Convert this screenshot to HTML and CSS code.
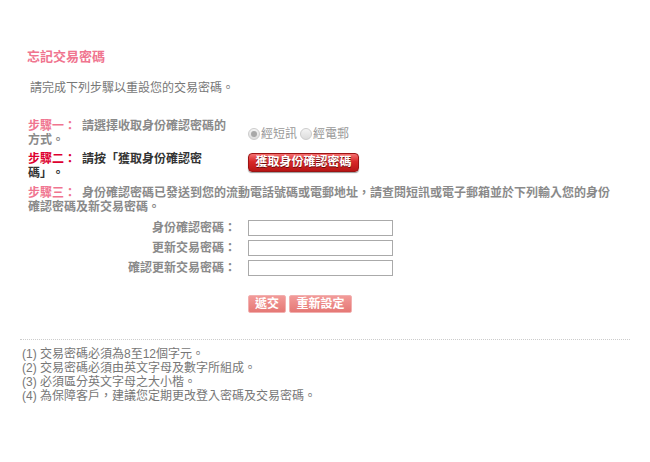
FILE: index.html
```html
<!DOCTYPE html>
<html lang="zh-Hant">

<head>
    <meta charset="UTF-8">
    <meta name="viewport" content="width=device-width, initial-scale=1.0">
    <title>忘記交易密碼</title>
    <link rel="stylesheet" href="styles.css">
</head>

<body>
    <main class="page">
        <div class="main">
            <h2 class="title">忘記交易密碼</h2>
            <p class="intro">請完成下列步驟以重設您的交易密碼。</p>

            <div class="step-row step-one">
                <div class="step-text"><span class="label">步驟一：</span>請選擇收取身份確認密碼的方式。</div>
                <div class="radios">
                    <label><input type="radio" name="way" checked>經短訊</label>
                    <label><input type="radio" name="way">經電郵</label>
                </div>
            </div>

            <div class="step-row step-two">
                <div class="step-text"><span class="label">步驟二：</span>請按「獲取身份確認密碼」。</div>
                <div><button class="btn-get">獲取身份確認密碼</button></div>
            </div>

            <div class="step-three"><span class="label">步驟三：</span>身份確認密碼已發送到您的流動電話號碼或電郵地址，請查閱短訊或電子郵箱並於下列輸入您的身份<br>確認密碼及新交易密碼。</div>

            <div class="form">
                <label class="form-label">身份確認密碼：</label>
                <input class="ipt" type="password">
                <label class="form-label">更新交易密碼：</label>
                <input class="ipt" type="password">
                <label class="form-label">確認更新交易密碼：</label>
                <input class="ipt" type="password">
            </div>

            <div class="actions">
                <button class="btn-pink">遞交</button>
                <button class="btn-pink">重新設定</button>
            </div>
        </div>

        <ul class="notes">
            <li>(1) 交易密碼必須為8至12個字元。</li>
            <li>(2) 交易密碼必須由英文字母及數字所組成。</li>
            <li>(3) 必須區分英文字母之大小楷。</li>
            <li>(4) 為保障客戶，建議您定期更改登入密碼及交易密碼。</li>
        </ul>
    </main>
</body>

</html>
```

FILE: styles.css
```css
* {
    margin: 0;
    padding: 0;
    box-sizing: border-box;
    list-style: none;
}

html,
body {
    width: 100%;
    height: 100%;
    background-color: #ffffff;
}

body {
    font-family: "Liberation Sans", "Noto Sans CJK TC", sans-serif;
    font-size: 12px;
    line-height: 14px;
    color: #666;
    text-spacing-trim: space-all;
}

.page {
    padding: 50px 20px 0 20px;
}

.main {
    padding: 0 4px 0 8px;
}

.title {
    font-size: 13px;
    font-weight: bold;
    color: #f07590;
    margin-left: -1px;
}

.intro {
    margin: 17px 0 0 2px;
    color: #777;
}

.step-row {
    display: grid;
    grid-template-columns: 206px 1fr;
    column-gap: 14px;
    margin-top: 5px;
}

.step-one {
    margin-top: 24px;
}

.step-text,
.step-three {
    font-weight: bold;
    color: #8a8a8a;
}

.label {
    color: #f07590;
    margin-right: 6px;
}

.step-two .step-text {
    color: #333;
}

.step-two .label {
    color: #dd0030;
}

.radios {
    display: flex;
    gap: 3px;
    color: #999;
    padding-top: 1px;
}

.radios label {
    display: flex;
    align-items: center;
}

.radios input {
    appearance: none;
    width: 12px;
    height: 12px;
    border-radius: 50%;
    border: 1px solid #ccc;
    background: linear-gradient(#f4f4f4, #dcdcdc);
    margin-right: 1px;
    position: relative;
}

.radios input:checked::after {
    content: '';
    position: absolute;
    left: 2px;
    top: 2px;
    width: 6px;
    height: 6px;
    border-radius: 50%;
    background-color: #a8a8a8;
}

.btn-get {
    width: 111px;
    height: 19px;
    margin-top: 1px;
    border: 1px solid #9c1414;
    border-radius: 4px;
    background: linear-gradient(#f47070 0%, #d82828 45%, #b81616 100%);
    color: #fff;
    font-family: inherit;
    font-size: 12px;
    font-weight: bold;
    line-height: 15px;
    text-shadow: 0 1px 0 #6a0808;
    box-shadow: 0 1px 1px #999;
    cursor: pointer;
}

.step-three {
    margin-top: 6px;
}

.form {
    display: grid;
    grid-template-columns: 208px 145px;
    column-gap: 12px;
    row-gap: 4px;
    margin-top: 6px;
}

.form-label {
    text-align: right;
    font-weight: bold;
    color: #8a8a8a;
    line-height: 16px;
}

.ipt {
    height: 16px;
    width: 145px;
    border: 1px solid #aaa;
    outline: none;
}

.actions {
    display: flex;
    gap: 3px;
    margin: 19px 0 0 220px;
}

.btn-pink {
    height: 18px;
    padding: 0 5px;
    border: 1px solid #f2b0b0;
    border-radius: 2px;
    background: linear-gradient(#f29a98, #e57875);
    color: #fff;
    font-family: inherit;
    font-size: 12px;
    font-weight: bold;
    line-height: 16px;
    cursor: pointer;
}

.btn-pink:first-child {
    width: 38px;
}

.btn-pink:last-child {
    width: 63px;
}

.notes {
    margin-top: 26px;
    padding: 7px 0 0 2px;
    border-top: 1px dotted #ccc;
    color: #777;
}
```
